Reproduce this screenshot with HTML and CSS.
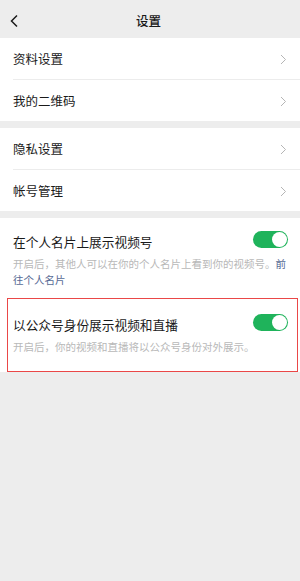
FILE: index.html
```html
<!DOCTYPE html>
<html lang="zh-CN">
<head>
    <meta charset="UTF-8">
    <meta name="viewport" content="width=device-width, initial-scale=1.0">
    <title>设置</title>
    <link rel="stylesheet" href="styles.css">
</head>
<body>
    <div class="page">
        <div class="header">
            <svg class="back" width="10" height="14" viewBox="0 0 10 14">
                <path d="M8 1.5 L2.5 7 L8 12.5" fill="none" stroke="#1a1a1a" stroke-width="1.5"/>
            </svg>
            <div class="title">设置</div>
        </div>

        <div class="group">
            <div class="row">
                <span>资料设置</span>
                <svg class="arrow" width="7" height="11" viewBox="0 0 7 11"><path d="M1 1 L5.5 5.5 L1 10" fill="none" stroke="#b5b5b5" stroke-width="1"/></svg>
            </div>
            <div class="row">
                <span>我的二维码</span>
                <svg class="arrow" width="7" height="11" viewBox="0 0 7 11"><path d="M1 1 L5.5 5.5 L1 10" fill="none" stroke="#b5b5b5" stroke-width="1"/></svg>
            </div>
        </div>

        <div class="group">
            <div class="row">
                <span>隐私设置</span>
                <svg class="arrow" width="7" height="11" viewBox="0 0 7 11"><path d="M1 1 L5.5 5.5 L1 10" fill="none" stroke="#b5b5b5" stroke-width="1"/></svg>
            </div>
            <div class="row">
                <span>帐号管理</span>
                <svg class="arrow" width="7" height="11" viewBox="0 0 7 11"><path d="M1 1 L5.5 5.5 L1 10" fill="none" stroke="#b5b5b5" stroke-width="1"/></svg>
            </div>
        </div>

        <div class="group">
            <div class="switch-item">
                <div class="switch-line">
                    <span>在个人名片上展示视频号</span>
                    <div class="toggle"><div class="knob"></div></div>
                </div>
                <p class="desc">开启后，其他人可以在你的个人名片上看到你的视频号。<span class="link">前往个人名片</span></p>
            </div>
            <div class="switch-item highlight">
                <div class="switch-line">
                    <span>以公众号身份展示视频和直播</span>
                    <div class="toggle"><div class="knob"></div></div>
                </div>
                <p class="desc">开启后，你的视频和直播将以公众号身份对外展示。</p>
            </div>
        </div>
    </div>
</body>
</html>
```

FILE: styles.css
```css
body {
    margin: 0;
    padding: 0;
    background-color: #ededed;
    font-family: "Noto Sans CJK SC", "Noto Sans", sans-serif;
    color: #1a1a1a;
}

.page {
    width: 300px;
    min-height: 581px;
}

.header {
    height: 38px;
    display: flex;
    align-items: center;
    justify-content: center;
    position: relative;
}

.back {
    position: absolute;
    left: 9px;
    top: 14px;
}

.title {
    font-size: 12.5px;
    font-weight: 500;
    margin-left: -3px;
    margin-top: 2px;
}

.group {
    background-color: #ffffff;
    margin-bottom: 7px;
}

.row {
    height: 41px;
    margin-left: 13px;
    padding-right: 13px;
    display: flex;
    align-items: center;
    justify-content: space-between;
    font-size: 12.5px;
    border-bottom: 1px solid #ececec;
}

.row:last-child {
    border-bottom: none;
}

.arrow {
    margin-top: 1px;
}

.switch-item {
    padding: 13px 12px 10px 13px;
}

.switch-line {
    height: 20px;
    display: flex;
    align-items: center;
    justify-content: space-between;
    font-size: 12.7px;
}

.toggle {
    width: 35px;
    height: 17px;
    border-radius: 9px;
    background-color: #1fb35b;
    display: flex;
    align-items: center;
    justify-content: flex-end;
    padding-right: 1px;
    box-sizing: border-box;
    margin-top: -3px;
}

.knob {
    width: 15px;
    height: 15px;
    border-radius: 50%;
    background-color: #ffffff;
}

.desc {
    margin: 5px 0 0 0;
    font-size: 10.5px;
    line-height: 16px;
    color: #b8b8b8;
}

.link {
    color: #576b95;
}

.highlight {
    margin: 0 2px 0 7px;
    padding: 15px 9px 16px 5px;
    border: 1px solid #ea4747;
}
```
